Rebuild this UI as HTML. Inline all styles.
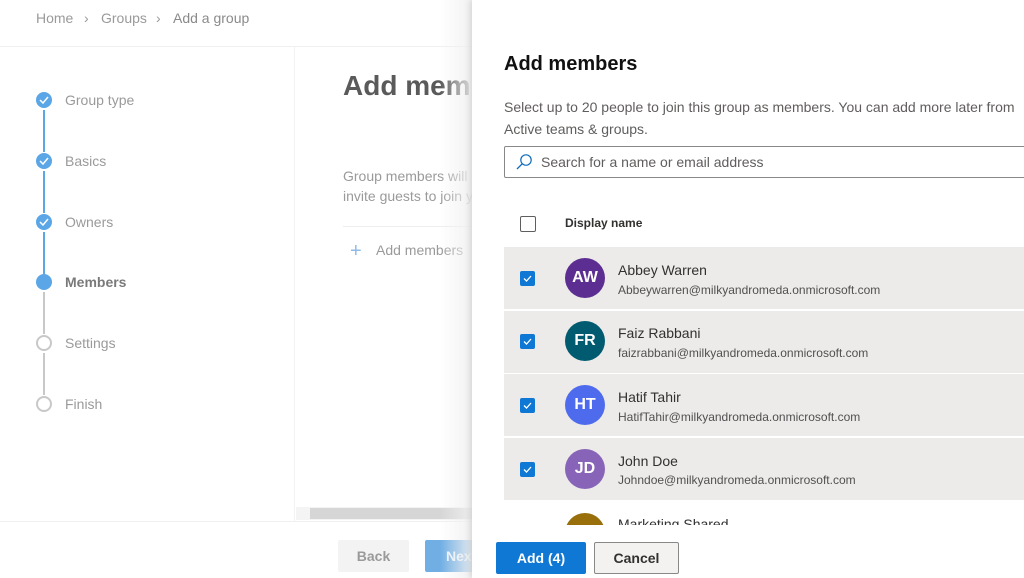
<!DOCTYPE html>
<html><head><meta charset="utf-8"><style>
*{box-sizing:border-box;margin:0;padding:0}
body{width:1024px;height:578px;overflow:hidden;position:relative;background:#fff;font-family:"Liberation Sans",sans-serif}
.a{position:absolute}
.bc{top:10px;font-size:14px;color:#9a9a9a}
.step{left:65px;font-size:14px;color:#9a9a9a}
.dot{left:36px;width:16px;height:16px;border-radius:50%;background:#5aa6e6}
.dot svg{position:absolute;left:3px;top:4px}
.ring{left:36px;width:16px;height:16px;border-radius:50%;border:2px solid #c8c8c8}
.vl{left:43px;width:2px}
.row{left:504px;width:520px;height:62px;background:#edebe9}
.cb{width:15px;height:15px;border-radius:2px;background:#0f78d4;left:520px}
.cb svg{position:absolute;left:3px;top:4px}
.av{left:565px;width:40px;height:40px;border-radius:50%;color:#fff;font-size:16px;font-weight:bold;text-align:center;line-height:40px}
.nm{left:618px;font-size:14px;color:#323130}
.em{left:618px;font-size:12px;color:#505050}
</style></head><body>
<div class="a bc" style="left:36px">Home</div>
<div class="a bc" style="left:84px">&#8250;</div>
<div class="a bc" style="left:101px">Groups</div>
<div class="a bc" style="left:156px">&#8250;</div>
<div class="a bc" style="left:173px;color:#8a8a8a">Add a group</div>
<div class="a" style="left:0;top:46px;width:472px;height:1px;background:#f0f0f0"></div>
<div class="a" style="left:294px;top:47px;width:1px;height:474px;background:#f2f2f2"></div>

<div class="a vl" style="top:110px;height:42px;background:#5aa6e6"></div>
<div class="a vl" style="top:171px;height:42px;background:#5aa6e6"></div>
<div class="a vl" style="top:232px;height:42px;background:#5aa6e6"></div>
<div class="a vl" style="top:292px;height:42px;background:#c8c8c8"></div>
<div class="a vl" style="top:353px;height:42px;background:#c8c8c8"></div>
<div class="a dot" style="top:92px"><svg width="10" height="8"><path d="M1 4l3 3 5-6" stroke="#fff" stroke-width="1.5" fill="none"/></svg></div>
<div class="a dot" style="top:153px"><svg width="10" height="8"><path d="M1 4l3 3 5-6" stroke="#fff" stroke-width="1.5" fill="none"/></svg></div>
<div class="a dot" style="top:214px"><svg width="10" height="8"><path d="M1 4l3 3 5-6" stroke="#fff" stroke-width="1.5" fill="none"/></svg></div>
<div class="a dot" style="top:274px"></div>
<div class="a ring" style="top:335px"></div>
<div class="a ring" style="top:396px"></div>
<div class="a step" style="top:92px">Group type</div>
<div class="a step" style="top:153px">Basics</div>
<div class="a step" style="top:214px">Owners</div>
<div class="a step" style="top:274px;font-weight:bold;color:#7a7a7a">Members</div>
<div class="a step" style="top:335px">Settings</div>
<div class="a step" style="top:396px">Finish</div>

<div class="a" style="left:343px;top:70px;font-size:28px;font-weight:bold;color:#5a5a5a">Add mem</div>
<div class="a" style="left:343px;top:166px;font-size:14px;line-height:20px;color:#9a9a9a;white-space:nowrap">Group members will<br>invite guests to join y</div>
<div class="a" style="left:343px;top:226px;width:130px;height:1px;background:#eee"></div>
<div class="a" style="left:350px;top:240px;font-size:20px;color:#8fbbe6;font-weight:200">+</div>
<div class="a" style="left:376px;top:242px;font-size:14px;color:#9a9a9a">Add members</div>

<div class="a" style="left:296px;top:507px;width:176px;height:13px;background:#f4f4f4"></div>
<div class="a" style="left:310px;top:508px;width:162px;height:11px;background:#d6d6d6"></div>
<div class="a" style="left:0;top:521px;width:472px;height:1px;background:#f0f0f0"></div>
<div class="a" style="left:338px;top:540px;width:71px;height:32px;background:#f3f3f3;border-radius:2px;color:#9a9a9a;font-size:14px;font-weight:bold;text-align:center;line-height:32px">Back</div>
<div class="a" style="left:425px;top:540px;width:60px;height:32px;background:#70aee4;border-radius:2px;color:#eaf3fb;font-size:14px;font-weight:bold;line-height:32px;padding-left:21px">Nex</div>
<div class="a" style="left:440px;top:0;width:32px;height:578px;background:linear-gradient(to right,rgba(255,255,255,0),rgba(240,240,240,0.9))"></div>

<div class="a" style="left:472px;top:0;width:552px;height:578px;background:#fff;box-shadow:-2px 0 6px rgba(0,0,0,0.12)">
</div>
<div class="a" style="left:504px;top:53px;font-size:20px;font-weight:bold;color:#111">Add members</div>
<div class="a" style="left:504px;top:96px;font-size:14px;line-height:22px;color:#605e5c;white-space:nowrap">Select up to 20 people to join this group as members. You can add more later from<br>Active teams &amp; groups.</div>
<div class="a" style="left:504px;top:146px;width:530px;height:32px;border:1px solid #8a8886;border-radius:2px"></div>
<svg class="a" style="left:515px;top:153px" width="18" height="18"><circle cx="11" cy="7" r="5.2" stroke="#0f6cbd" stroke-width="1.2" fill="none"/><path d="M7.3 10.7L2 16" stroke="#0f6cbd" stroke-width="1.3"/></svg>
<div class="a" style="left:541px;top:154px;font-size:14px;color:#605e5c">Search for a name or email address</div>

<div class="a" style="left:520px;top:216px;width:16px;height:16px;border:1px solid #605e5c;border-radius:2px"></div>
<div class="a" style="left:565px;top:216px;font-size:12px;font-weight:bold;color:#323130">Display name</div>

<div class="a row" style="top:247px"></div>
<div class="a row" style="top:311px"></div>
<div class="a row" style="top:374px"></div>
<div class="a row" style="top:438px"></div>

<div class="a cb" style="top:271px"><svg width="9" height="7"><path d="M1 3.5l2.5 2.5 4.5-5" stroke="#fff" stroke-width="1.3" fill="none"/></svg></div>
<div class="a cb" style="top:334px"><svg width="9" height="7"><path d="M1 3.5l2.5 2.5 4.5-5" stroke="#fff" stroke-width="1.3" fill="none"/></svg></div>
<div class="a cb" style="top:398px"><svg width="9" height="7"><path d="M1 3.5l2.5 2.5 4.5-5" stroke="#fff" stroke-width="1.3" fill="none"/></svg></div>
<div class="a cb" style="top:462px"><svg width="9" height="7"><path d="M1 3.5l2.5 2.5 4.5-5" stroke="#fff" stroke-width="1.3" fill="none"/></svg></div>

<div class="a av" style="top:258px;background:#5c2e91">AW</div>
<div class="a av" style="top:321px;background:#005b70">FR</div>
<div class="a av" style="top:385px;background:#4f6bed">HT</div>
<div class="a av" style="top:449px;background:#8764b8">JD</div>

<div class="a nm" style="top:262px">Abbey Warren</div>
<div class="a em" style="top:283px">Abbeywarren@milkyandromeda.onmicrosoft.com</div>
<div class="a nm" style="top:325px">Faiz Rabbani</div>
<div class="a em" style="top:346px">faizrabbani@milkyandromeda.onmicrosoft.com</div>
<div class="a nm" style="top:389px">Hatif Tahir</div>
<div class="a em" style="top:410px">HatifTahir@milkyandromeda.onmicrosoft.com</div>
<div class="a nm" style="top:453px">John Doe</div>
<div class="a em" style="top:473px">Johndoe@milkyandromeda.onmicrosoft.com</div>

<div class="a" style="left:472px;top:500px;width:552px;height:25px;overflow:hidden">
<div class="a" style="left:93px;top:13px;width:40px;height:40px;border-radius:50%;background:#986f0b"></div>
<div class="a" style="left:146px;top:16px;font-size:14px;color:#323130">Marketing Shared</div>
</div>

<div class="a" style="left:496px;top:542px;width:90px;height:32px;background:#0f78d4;border-radius:2px;color:#fff;font-size:14px;font-weight:bold;text-align:center;line-height:32px">Add (4)</div>
<div class="a" style="left:594px;top:542px;width:85px;height:32px;background:#f3f2f1;border:1px solid #8a8886;border-radius:2px;color:#323130;font-size:14px;font-weight:bold;text-align:center;line-height:30px">Cancel</div>
</body></html>
